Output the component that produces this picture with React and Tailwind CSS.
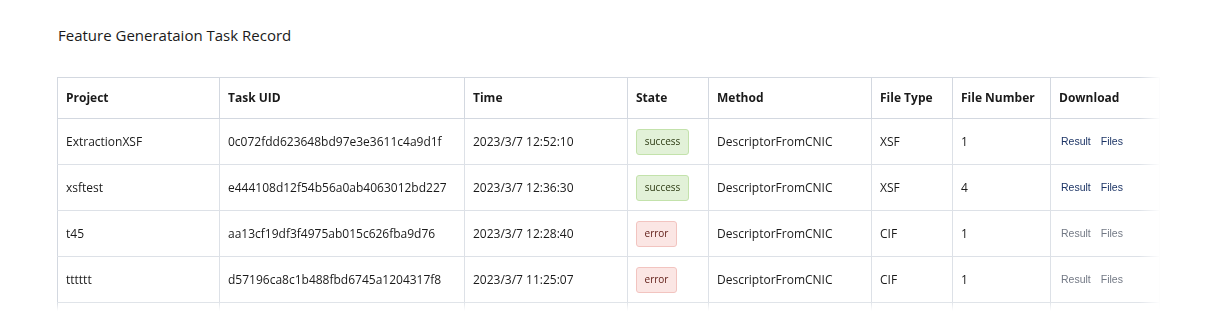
import React from 'react';

const COLUMNS = [
    { title: 'Project', width: 'w-[162px]' },
    { title: 'Task UID', width: 'w-[245px]' },
    { title: 'Time', width: 'w-[163px]' },
    { title: 'State', width: 'w-[81px]' },
    { title: 'Method', width: 'w-[163px]' },
    { title: 'File Type', width: 'w-[81px]' },
    { title: 'File Number', width: 'w-[98px]' },
    { title: 'Download', width: 'w-[109px]' },
];

const TASKS = [
    { project: 'ExtractionXSF', uid: '0c072fdd623648bd97e3e3611c4a9d1f', time: '2023/3/7 12:52:10', state: 'success', method: 'DescriptorFromCNIC', type: 'XSF', num: 1 },
    { project: 'xsftest', uid: 'e444108d12f54b56a0ab4063012bd227', time: '2023/3/7 12:36:30', state: 'success', method: 'DescriptorFromCNIC', type: 'XSF', num: 4 },
    { project: 't45', uid: 'aa13cf19df3f4975ab015c626fba9d76', time: '2023/3/7 12:28:40', state: 'error', method: 'DescriptorFromCNIC', type: 'CIF', num: 1 },
    { project: 'tttttt', uid: 'd57196ca8c1b488fbd6745a1204317f8', time: '2023/3/7 11:25:07', state: 'error', method: 'DescriptorFromCNIC', type: 'CIF', num: 1 },
];

function StateTag({ state }) {
    if (state === 'success') {
        return (
            <span className="inline-flex items-center justify-center w-[53px] h-[26px] rounded-[3px] border border-[#c3e2ab] bg-[#e2f1d8] text-[10px] text-[#2c3a12]">
                success
            </span>
        );
    }
    return (
        <span className="inline-flex items-center justify-center w-[41px] h-[26px] rounded-[3px] border border-[#f2c4c0] bg-[#fbe6e4] text-[10px] text-[#5e1a14]">
            error
        </span>
    );
}

export default function App() {
    return (
        <div className="w-[1231px] h-[315px] overflow-hidden bg-white text-[#1a1a1a] font-['Open_Sans','Noto_Sans',sans-serif]">
            <h1 className="pl-[58px] pt-[25px] h-[77px] text-[15px] leading-[20px]">Feature Generataion Task Record</h1>

            {/* table, right and bottom edges fade out */}
            <div className="ml-[57px] w-[1104px] h-[234px] overflow-hidden [mask-image:linear-gradient(to_right,black_98%,transparent),linear-gradient(to_bottom,black_96%,transparent)] [mask-composite:intersect]">
                <table className="table-fixed border-collapse border-l border-[#d3d8e0] text-[12px]">
                    <thead>
                        <tr className="h-[41px] border-y border-[#d3d8e0]">
                            {COLUMNS.map((col) => (
                                <th key={col.title} className={`${col.width} px-2 text-left font-bold border-r border-[#d3d8e0]`}>{col.title}</th>
                            ))}
                        </tr>
                    </thead>
                    <tbody>
                        {TASKS.map((task) => (
                            <tr key={task.uid} className="h-[46px] border-b border-[#dde1e7]">
                                <td className="px-2 border-r border-[#dde1e7]">{task.project}</td>
                                <td className="px-2 border-r border-[#dde1e7]">{task.uid}</td>
                                <td className="px-2 border-r border-[#dde1e7]">{task.time}</td>
                                <td className="px-2 border-r border-[#dde1e7]"><StateTag state={task.state} /></td>
                                <td className="px-2 border-r border-[#dde1e7]">{task.method}</td>
                                <td className="px-2 border-r border-[#dde1e7]">{task.type}</td>
                                <td className="px-2 border-r border-[#dde1e7]">{task.num}</td>
                                <td className="px-2 border-r border-[#dde1e7]">
                                    <div className={`flex gap-[10px] pl-[2px] text-[10.5px] font-['Liberation_Sans',sans-serif] ${task.state === 'success' ? 'text-[#1d3566]' : 'text-[#737985]'}`}>
                                        <span>Result</span>
                                        <span>Files</span>
                                    </div>
                                </td>
                            </tr>
                        ))}
                        <tr className="h-[46px]">
                            {COLUMNS.map((col) => (
                                <td key={col.title} className="border-r border-[#dde1e7]"></td>
                            ))}
                        </tr>
                    </tbody>
                </table>
            </div>
        </div>
    );
}
